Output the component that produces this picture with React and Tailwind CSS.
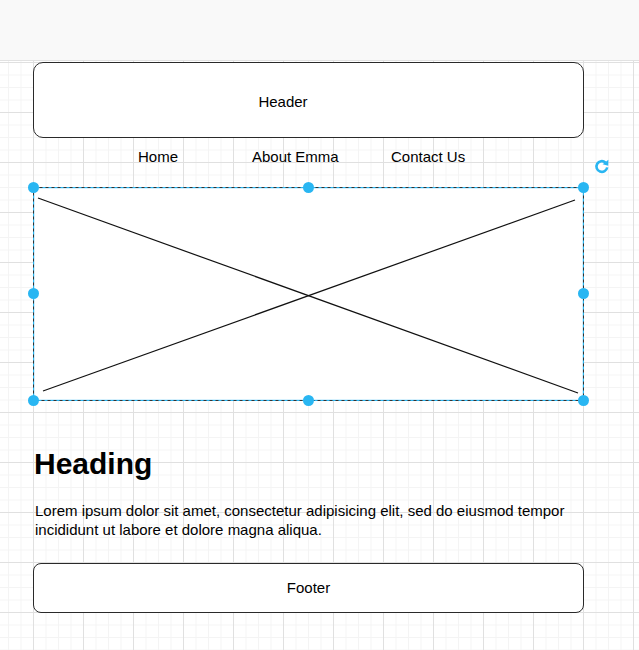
import React from 'react'

const HANDLES = [
  'left-[-5.5px] top-[-5.5px]',
  'left-[269.5px] top-[-5.5px]',
  'left-[544.5px] top-[-5.5px]',
  'left-[-5.5px] top-[100.5px]',
  'left-[544.5px] top-[100.5px]',
  'left-[-5.5px] top-[207.5px]',
  'left-[269.5px] top-[207.5px]',
  'left-[544.5px] top-[207.5px]',
]

function RotateHandle() {
  return (
    <svg className="absolute left-[561px] top-[-29px]" width="16" height="16" viewBox="0 0 16 16">
      <path d="M11.4 4.4 A5.4 5.4 0 1 0 13.2 9.4" fill="none" stroke="#29b6f2" strokeWidth="2.6" />
      <path d="M14.4 1.8 L14.2 7.8 L8.6 6.2 Z" fill="#29b6f2" />
    </svg>
  )
}

function ImagePlaceholder() {
  return (
    <div className="relative h-[214px] w-[551px] bg-white">
      <svg className="absolute inset-0" width="551" height="214" viewBox="0 0 551 214">
        <line x1="5" y1="11" x2="545" y2="206" stroke="#111" strokeWidth="1.2" />
        <line x1="10" y1="204" x2="542" y2="13" stroke="#111" strokeWidth="1.2" />
        <rect x="0.5" y="0.5" width="550" height="213" fill="none" stroke="#29b6f2" strokeWidth="1.4" />
        <rect x="0.5" y="0.5" width="550" height="213" fill="none" stroke="#333" strokeWidth="1" strokeDasharray="3 3" />
      </svg>
      {HANDLES.map((h, i) => (
        <span key={i} className={`absolute h-[11px] w-[11px] rounded-full bg-[#29b6f2] ${h}`} />
      ))}
      <RotateHandle />
    </div>
  )
}

export default function App() {
  return (
    <div className="min-h-screen bg-white font-['Liberation_Sans',Arial,sans-serif] text-black">
      {/* toolbar strip */}
      <div className="h-[61px] border-b border-[#e2e2e2] bg-[#f9f9f9]" />

      {/* canvas */}
      <div className="h-[589px] bg-white bg-[image:linear-gradient(to_right,#e0e0e0_1px,transparent_1px),linear-gradient(to_bottom,#e0e0e0_1px,transparent_1px),linear-gradient(to_right,#f4f4f4_1px,transparent_1px),linear-gradient(to_bottom,#f4f4f4_1px,transparent_1px)] bg-[size:50px_50px,50px_50px,12.5px_12.5px,12.5px_12.5px] bg-[position:33px_1px]">
        <div className="ml-[33px] w-[551px] pt-[1px]">
          {/* Header */}
          <div className="flex h-[76px] items-center justify-center rounded-[10px] border border-[#2a2a2a] bg-white pr-[51px] pt-[4px] text-[15px] leading-[18px]">
            Header
          </div>

          {/* Nav */}
          <div className="flex h-[49px] pt-[10px] text-[15px] leading-[18px]">
            <span className="ml-[105px] w-[114px]">Home</span>
            <span className="w-[139px]">About Emma</span>
            <span>Contact Us</span>
          </div>

          <ImagePlaceholder />

          <h1 className="ml-[1px] mt-[48px] text-[30px] font-bold leading-[30px]">Heading</h1>
          <p className="ml-[2px] mt-[22px] w-[545px] text-[15px] leading-[19px]">
            Lorem ipsum dolor sit amet, consectetur adipisicing elit, sed do eiusmod tempor incididunt ut labore et dolore magna aliqua.
          </p>

          {/* Footer */}
          <div className="mt-[24px] flex h-[50px] items-center justify-center rounded-[8px] border border-[#2a2a2a] bg-white text-[15px] leading-[18px]">
            Footer
          </div>
        </div>
      </div>
    </div>
  )
}
